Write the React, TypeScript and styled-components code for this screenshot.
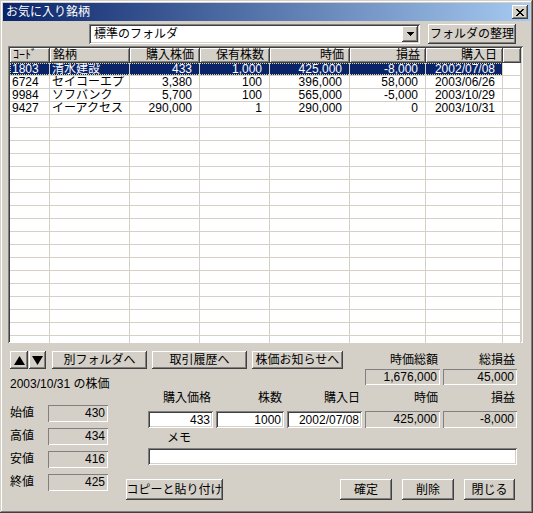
import styled, { createGlobalStyle, css } from "styled-components";

const FACE = "#d4d0c8";
const FONT = `"Liberation Sans", "Noto Sans CJK JP", sans-serif`;
const COLS = "40px 80px 70px 70px 80px 76px 77px 18px";

type Align = "left" | "right";

const columns: { title: string; align: Align }[] = [
  { title: "ｺｰﾄﾞ", align: "left" },
  { title: "銘柄", align: "left" },
  { title: "購入株価", align: "right" },
  { title: "保有株数", align: "right" },
  { title: "時価", align: "right" },
  { title: "損益", align: "right" },
  { title: "購入日", align: "right" },
];

const stocks = [
  ["1803", "清水建設", "433", "1,000", "425,000", "-8,000", "2002/07/08"],
  ["6724", "セイコーエプ", "3,380", "100", "396,000", "58,000", "2003/06/26"],
  ["9984", "ソフバンク", "5,700", "100", "565,000", "-5,000", "2003/10/29"],
  ["9427", "イーアクセス", "290,000", "1", "290,000", "0", "2003/10/31"],
];

const prices = [
  { label: "始値", value: "430" },
  { label: "高値", value: "434" },
  { label: "安値", value: "416" },
  { label: "終値", value: "425" },
];

const GlobalStyle = createGlobalStyle`
  html, body {
    margin: 0;
    padding: 0;
    background: ${FACE};
  }
  body {
    font-family: ${FONT};
    font-size: 12px;
    color: #000;
  }
  * {
    box-sizing: border-box;
  }
`;

const raised = css`
  background: ${FACE};
  box-shadow: inset -1px -1px #404040, inset 1px 1px #fff,
    inset -2px -2px #808080, inset 2px 2px ${FACE};
`;

const sunken = css`
  box-shadow: inset 1px 1px #808080, inset -1px -1px #fff,
    inset 2px 2px #404040, inset -2px -2px ${FACE};
`;

const Window = styled.div`
  width: 533px;
  height: 513px;
  padding: 3px;
  background: ${FACE};
  box-shadow: inset -1px -1px #404040, inset 1px 1px ${FACE},
    inset -2px -2px #808080, inset 2px 2px #fff;
  display: flex;
  flex-direction: column;
`;

const TitleBar = styled.div`
  height: 18px;
  display: flex;
  align-items: center;
  justify-content: space-between;
  padding: 0 2px 0 3px;
  background: linear-gradient(to right, #0a246a, #a6caf0);
`;

const Title = styled.span`
  color: #fff;
  font-size: 12px;
  line-height: 14px;
`;

const CloseButton = styled.div`
  width: 16px;
  height: 14px;
  ${raised};
  display: flex;
  align-items: center;
  justify-content: center;
`;

const Body = styled.div`
  flex: 1;
  display: flex;
  flex-direction: column;
  padding: 3px 7px 0 5px;
`;

const Toolbar = styled.div`
  display: flex;
  justify-content: flex-end;
  gap: 8px;
  padding-right: 7px;
  height: 20px;
`;

const Combo = styled.div`
  width: 331px;
  height: 20px;
  background: #fff;
  ${sunken};
  display: flex;
  align-items: center;
  padding: 2px;
`;

const ComboText = styled.span`
  flex: 1;
  padding-left: 3px;
  line-height: 14px;
`;

const ComboArrow = styled.div`
  width: 16px;
  height: 16px;
  ${raised};
  display: flex;
  align-items: center;
  justify-content: center;
`;

const Button = styled.button<{ $w: number; $h?: number }>`
  width: ${(p) => p.$w}px;
  height: ${(p) => p.$h ?? 21}px;
  border: none;
  padding: 0;
  margin: 0;
  font-family: ${FONT};
  font-size: 12px;
  color: #000;
  line-height: 14px;
  ${raised};
  display: flex;
  align-items: center;
  justify-content: center;
  white-space: nowrap;
`;

const ListView = styled.div`
  margin-top: 2px;
  height: 297px;
  width: 515px;
  padding: 2px;
  ${sunken};
  background: #fff;
  display: flex;
  flex-direction: column;
  overflow: hidden;
`;

const HeaderRow = styled.div`
  display: grid;
  grid-template-columns: ${COLS};
  height: 15px;
  flex: none;
`;

const HeaderCell = styled.div<{ $align: Align }>`
  ${raised};
  box-shadow: inset -1px -1px #404040, inset 1px 1px #fff,
    inset -2px -2px #808080;
  text-align: ${(p) => p.$align};
  padding: 0 6px 0 3px;
  line-height: 15px;
  white-space: nowrap;
  overflow: hidden;
`;

const Row = styled.div<{ $focused?: boolean }>`
  display: grid;
  grid-template-columns: ${COLS};
  height: 13px;
  flex: none;
  position: relative;

  ${(p) =>
    p.$focused &&
    css`
      &::after {
        content: "";
        position: absolute;
        left: 0;
        top: 0;
        width: calc(100% - 18px);
        height: 12px;
        outline: 1px dotted #d8d8a0;
        outline-offset: -1px;
        pointer-events: none;
      }
    `}
`;

const Cell = styled.div<{ $align?: Align; $selected?: boolean }>`
  border-right: 1px solid ${FACE};
  border-bottom: 1px solid ${FACE};
  background: ${(p) => (p.$selected ? "#0a246a" : "#fff")};
  color: ${(p) => (p.$selected ? "#fff" : "#000")};
  text-align: ${(p) => p.$align ?? "left"};
  padding: ${(p) => (p.$align === "right" ? "0 7px 0 0" : "0 0 0 2px")};
  line-height: 12px;
  white-space: nowrap;
  overflow: hidden;
`;

const Footer = styled.div`
  margin: 8px 6px 0 2px;
  display: grid;
  grid-template-columns: 116px 1fr 152px;
  grid-template-rows: 18px 16px auto;
  grid-template-areas:
    "nav nav summary"
    "left . summary"
    "left form form";
`;

const Nav = styled.div`
  grid-area: nav;
  display: flex;
  align-items: stretch;
`;

const ArrowPair = styled.div`
  display: flex;
  gap: 1px;
  margin-right: 6px;
`;

const NavButtons = styled.div`
  display: flex;
  gap: 5px;
`;

const Summary = styled.div`
  grid-area: summary;
  display: grid;
  grid-template-columns: 75px 74px;
  grid-template-rows: 18px 16px;
  column-gap: 3px;
`;

const FieldLabel = styled.div`
  text-align: right;
  padding-right: 2px;
  align-self: center;
  line-height: 13px;
  white-space: nowrap;
`;

const StaticBox = styled.div<{ $h?: number }>`
  height: ${(p) => p.$h ?? 16}px;
  background: ${FACE};
  box-shadow: inset 1px 1px #808080, inset -1px -1px #fff;
  text-align: right;
  padding-right: 3px;
  line-height: ${(p) => p.$h ?? 16}px;
  white-space: nowrap;
`;

const LeftPanel = styled.div`
  grid-area: left;
  padding-top: 9px;
  display: flex;
  flex-direction: column;
`;

const DateLabel = styled.div`
  line-height: 12px;
  height: 12px;
  white-space: nowrap;
`;

const PriceList = styled.div`
  margin-top: 15px;
  display: flex;
  flex-direction: column;
  gap: 6px;
`;

const PriceRow = styled.div`
  display: flex;
  align-items: center;
`;

const PriceLabel = styled.span`
  width: 38px;
  line-height: 17px;
`;

const PriceBox = styled(StaticBox)`
  width: 60px;
`;

const Form = styled.div`
  grid-area: form;
  display: grid;
  grid-template-columns: 19px 65px 68px 75px 75px 74px;
  grid-template-rows: 26px 17px 20px 17px auto;
  column-gap: 3px;
`;

const Field = styled.input`
  height: 17px;
  width: 100%;
  border: none;
  margin: 0;
  padding: 0 3px 0 3px;
  background: #fff;
  ${sunken};
  font-family: ${FONT};
  font-size: 12px;
  color: #000;
  text-align: right;
  outline: none;
`;

const MemoLabel = styled.div`
  grid-column: 2 / 4;
  align-self: center;
  padding-left: 19px;
  line-height: 13px;
`;

const MemoField = styled(Field)`
  grid-column: 2 / 7;
  text-align: left;
`;

const ButtonBar = styled.div`
  grid-column: 1 / 7;
  margin-top: 14px;
  display: flex;
  align-items: center;
  padding-right: 2px;
`;

const Spacer = styled.div`
  flex: 1;
`;

const ActionGroup = styled.div`
  display: flex;
  gap: 10px;
`;

function CloseGlyph() {
  return (
    <svg width="8" height="7" viewBox="0 0 8 7" shapeRendering="crispEdges">
      <path
        fill="#000"
        d="M0 0h2v1H0z M6 0h2v1H6z M1 1h2v1H1z M5 1h2v1H5z M2 2h4v1H2z M3 3h2v1H3z M2 4h4v1H2z M1 5h2v1H1z M5 5h2v1H5z M0 6h2v1H0z M6 6h2v1H6z"
      />
    </svg>
  );
}

function DownGlyph() {
  return (
    <svg width="7" height="4" viewBox="0 0 7 4" shapeRendering="crispEdges">
      <path fill="#000" d="M0 0h7v1H0z M1 1h5v1H1z M2 2h3v1H2z M3 3h1v1H3z" />
    </svg>
  );
}

function Triangle({ up }: { up?: boolean }) {
  return (
    <svg width="11" height="9" viewBox="0 0 11 9">
      <polygon fill="#000" points={up ? "5.5,0 11,9 0,9" : "0,0 11,0 5.5,9"} />
    </svg>
  );
}

const TOTAL_ROWS = 22;

function App() {
  const empty = Array.from({ length: TOTAL_ROWS - stocks.length });

  return (
    <>
      <GlobalStyle />
      <Window>
        <TitleBar>
          <Title>お気に入り銘柄</Title>
          <CloseButton>
            <CloseGlyph />
          </CloseButton>
        </TitleBar>
        <Body>
          <Toolbar>
            <Combo>
              <ComboText>標準のフォルダ</ComboText>
              <ComboArrow>
                <DownGlyph />
              </ComboArrow>
            </Combo>
            <Button $w={88} $h={20}>
              フォルダの整理
            </Button>
          </Toolbar>

          <ListView>
            <HeaderRow>
              {columns.map((c) => (
                <HeaderCell key={c.title} $align={c.align}>
                  {c.title}
                </HeaderCell>
              ))}
              <HeaderCell $align="left" />
            </HeaderRow>
            {stocks.map((s, i) => (
              <Row key={s[0]} $focused={i === 0}>
                {s.map((v, j) => (
                  <Cell key={j} $align={columns[j].align} $selected={i === 0}>
                    {v}
                  </Cell>
                ))}
                <Cell />
              </Row>
            ))}
            {empty.map((_, i) => (
              <Row key={`e${i}`}>
                {Array.from({ length: 8 }).map((__, j) => (
                  <Cell key={j} />
                ))}
              </Row>
            ))}
          </ListView>

          <Footer>
            <Nav>
              <ArrowPair>
                <Button $w={18} $h={18}>
                  <Triangle up />
                </Button>
                <Button $w={17} $h={18}>
                  <Triangle />
                </Button>
              </ArrowPair>
              <NavButtons>
                <Button $w={95} $h={18}>
                  別フォルダへ
                </Button>
                <Button $w={95} $h={18}>
                  取引履歴へ
                </Button>
                <Button $w={91} $h={18}>
                  株価お知らせへ
                </Button>
              </NavButtons>
            </Nav>

            <Summary>
              <FieldLabel>時価総額</FieldLabel>
              <FieldLabel>総損益</FieldLabel>
              <StaticBox>1,676,000</StaticBox>
              <StaticBox>45,000</StaticBox>
            </Summary>

            <LeftPanel>
              <DateLabel>2003/10/31 の株価</DateLabel>
              <PriceList>
                {prices.map((p) => (
                  <PriceRow key={p.label}>
                    <PriceLabel>{p.label}</PriceLabel>
                    <PriceBox $h={17}>{p.value}</PriceBox>
                  </PriceRow>
                ))}
              </PriceList>
            </LeftPanel>

            <Form>
              <span />
              <FieldLabel>購入価格</FieldLabel>
              <FieldLabel>株数</FieldLabel>
              <FieldLabel>購入日</FieldLabel>
              <FieldLabel>時価</FieldLabel>
              <FieldLabel>損益</FieldLabel>

              <span />
              <Field readOnly value="433" />
              <Field readOnly value="1000" />
              <Field readOnly value="2002/07/08" />
              <StaticBox $h={17}>425,000</StaticBox>
              <StaticBox $h={17}>-8,000</StaticBox>

              <MemoLabel>メモ</MemoLabel>
              <MemoField readOnly value="" />

              <ButtonBar>
                <Button $w={97}>コピーと貼り付け</Button>
                <Spacer />
                <ActionGroup>
                  <Button $w={52}>確定</Button>
                  <Button $w={52}>削除</Button>
                  <Button $w={51}>閉じる</Button>
                </ActionGroup>
              </ButtonBar>
            </Form>
          </Footer>
        </Body>
      </Window>
    </>
  );
}

export default App;
